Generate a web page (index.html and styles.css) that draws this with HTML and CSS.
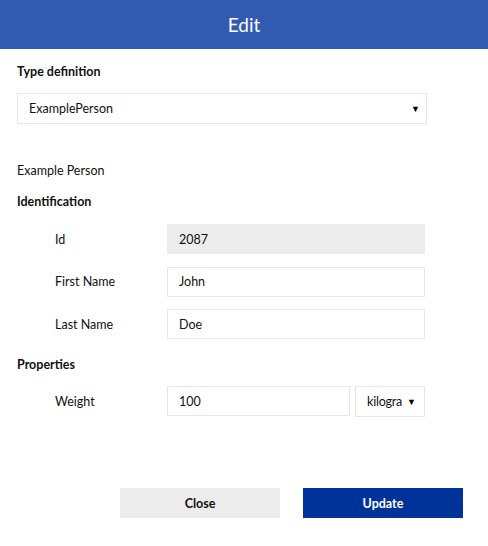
FILE: index.html
```html
<!DOCTYPE html>
<html>
<head>
<meta charset="utf-8">
<link rel="stylesheet" href="styles.css">
</head>
<body>
<div class="dialog">
  <header class="header">Edit</header>
  <main class="content">
    <div class="heading first">Type definition</div>
    <div class="select wide">
      <span class="select-text">ExamplePerson</span>
      <span class="arrow">▼</span>
    </div>
    <div class="desc">Example Person</div>
    <div class="heading">Identification</div>
    <div class="fields">
      <div class="row">
        <span class="label">Id</span>
        <div class="input readonly">2087</div>
      </div>
      <div class="row">
        <span class="label">First Name</span>
        <div class="input">John</div>
      </div>
      <div class="row">
        <span class="label">Last Name</span>
        <div class="input">Doe</div>
      </div>
    </div>
    <div class="heading props">Properties</div>
    <div class="fields props-fields">
      <div class="row">
        <span class="label">Weight</span>
        <div class="combo">
          <div class="input grow">100</div>
          <div class="select unit">
            <span class="select-text clip">kilogra</span>
            <span class="arrow">▼</span>
          </div>
        </div>
      </div>
    </div>
  </main>
  <footer class="footer">
    <button class="btn btn-close">Close</button>
    <button class="btn btn-update">Update</button>
  </footer>
</div>
</body>
</html>
```
FILE: styles.css
```css
* { box-sizing: border-box; }
html, body { margin: 0; padding: 0; background: #fff; }
body {
  font-family: "Lato", "Open Sans", sans-serif;
  font-size: 12.5px;
  color: #111;
}
.header {
  height: 49px;
  background: #315bb1;
  color: #fff;
  font-size: 19px;
  display: flex;
  align-items: center;
  justify-content: center;
}
.content {
  padding: 0 17px;
}
.heading {
  font-weight: 700;
  line-height: 16px;
  margin-top: 15px;
}
.heading.first { margin-top: 15px; }
.select {
  display: flex;
  align-items: center;
  justify-content: space-between;
  border: 1px solid #e6e6e6;
  background: #fff;
}
.select.wide {
  width: 410px;
  height: 31px;
  margin-top: 13px;
  padding: 0 6px 0 11px;
}
.arrow {
  font-size: 9px;
  color: #000;
}
.desc {
  margin-top: 39px;
  line-height: 16px;
}
.fields {
  padding-left: 38px;
  display: flex;
  flex-direction: column;
  gap: 12.5px;
  margin-top: 14px;
}
.fields.props-fields { margin-top: 13px; }
.row {
  display: grid;
  grid-template-columns: 112px 258px;
  align-items: center;
}
.input {
  height: 30px;
  border: 1px solid #e6e6e6;
  display: flex;
  align-items: center;
  padding-left: 11px;
}
.input.readonly {
  background: #ececec;
  border-color: #ececec;
}
.heading.props { margin-top: 18px; }
.combo {
  display: flex;
  gap: 5px;
}
.input.grow { flex: 1; }
.select.unit {
  width: 70px;
  height: 31px;
  padding: 0 8px 0 11px;
}
.clip {
  white-space: nowrap;
  letter-spacing: -0.2px;
}
.footer {
  display: flex;
  gap: 23px;
  padding-left: 120px;
  margin-top: 71px;
}
.btn {
  width: 160px;
  height: 30px;
  border: none;
  font-family: inherit;
  font-size: 12.5px;
  font-weight: 700;
}
.btn-close { background: #ececec; color: #111; }
.btn-update { background: #003399; color: #fff; }
```
